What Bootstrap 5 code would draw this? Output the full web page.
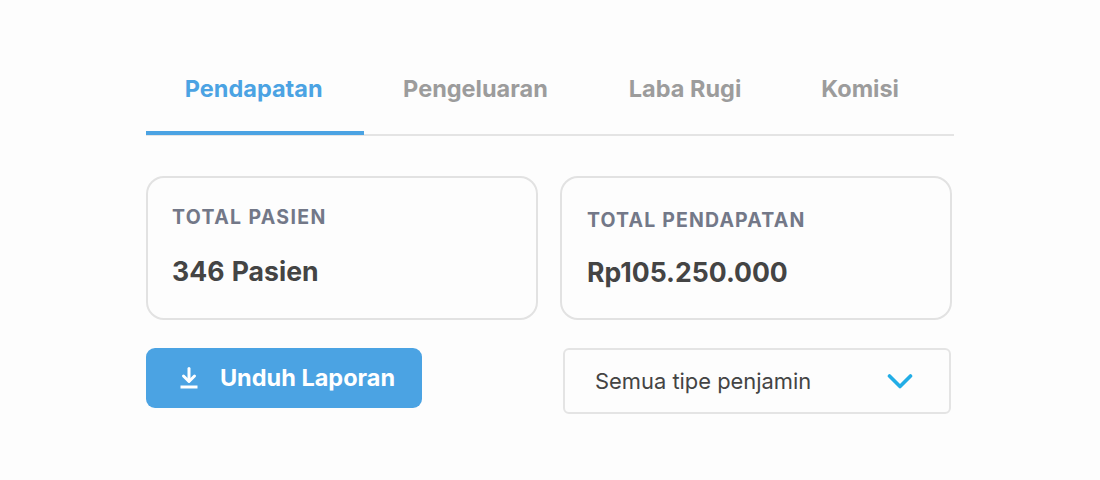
<!DOCTYPE html>
<html lang="id"><head><meta charset="utf-8"><title>Laporan</title>
<link href="https://cdn.jsdelivr.net/npm/bootstrap@5.3.0/dist/css/bootstrap.min.css" rel="stylesheet">
<style>
html,body{height:480px;overflow:hidden}
body{background:#fdfdfd;font-family:Inter,"Liberation Sans",sans-serif}
.wrap-main{width:808px;margin-left:146px;padding-top:62px}
.tabs-x{border-bottom:2px solid #e4e4e4;height:74px}
.tab-x{font-size:23.5px;font-weight:700;color:#9c9c9c;padding:1px 40px 21px;height:74px;line-height:52px;background:none;border:0}
.tab-x.on{color:#4ba3e3;padding:1px 41.5px 16px 38.8px;border-bottom:4px solid #4ba3e3;height:73px}
.tab-x.on + .tab-x{padding-left:39px;padding-right:41px}
.stats{margin-top:40px;gap:22px;width:806px}
.stat{width:392px;height:144px;border:2px solid #e2e2e2;border-radius:18px;background:#fdfdfd;padding:28px 24px 0}
.stat.alt{padding:31px 25px 0}
.stat-lab{font-size:19.5px;font-weight:700;letter-spacing:1.35px;color:#737888;line-height:22px}
.stat.alt .stat-lab{letter-spacing:1.15px}
.stat-val{font-size:26.6px;font-weight:700;color:#444;line-height:32px;margin-top:27px;word-spacing:1px}
.stat.alt .stat-val{margin-top:25px}
.actions{margin-top:28px}
.dl-btn{width:276px;height:60px;background:#4ba3e3;border:0;border-radius:9px;color:#fff;font-size:23.5px;font-weight:700;gap:21px;padding:0 0 0 6px}
.dl-btn:hover{background:#4ba3e3;color:#fff}
.sel-box{width:388px;height:66px;margin-left:141px;border:2px solid #e4e4e4;border-radius:6px;padding:0 36px 0 30px;font-size:21.9px;color:#444;background:#fdfdfd}
</style></head><body>
<main class="wrap-main">
<div class="tabs-x d-flex">
<button class="tab-x on" type="button">Pendapatan</button>
<button class="tab-x" type="button">Pengeluaran</button>
<button class="tab-x" type="button">Laba Rugi</button>
<button class="tab-x" type="button">Komisi</button>
</div>
<div class="stats d-flex">
<div class="stat"><div class="stat-lab">TOTAL PASIEN</div><div class="stat-val">346 Pasien</div></div>
<div class="stat alt"><div class="stat-lab">TOTAL PENDAPATAN</div><div class="stat-val">Rp105.250.000</div></div>
</div>
<div class="actions d-flex align-items-start">
<button class="dl-btn btn d-flex align-items-center justify-content-center" type="button">
<svg width="20" height="22" viewBox="0 0 20 22" fill="none" stroke="#fff" stroke-width="3" aria-hidden="true"><path d="M10 1.500v12" stroke-linecap="round"/><path d="M4.500 9l5.500 5.500 5.500-5.500" stroke-linecap="round" stroke-linejoin="round"/><path d="M1.500 20h17"/></svg>
<span>Unduh Laporan</span></button>
<div class="sel-box d-flex align-items-center justify-content-between"><span>Semua tipe penjamin</span>
<svg width="26" height="16" viewBox="0 0 26 16" fill="none" stroke="#22ade6" stroke-width="3.600" stroke-linecap="round" stroke-linejoin="round" aria-hidden="true"><path d="M2.500 3l10.500 10.500L23.500 3"/></svg></div>
</div>
</main>
<script src="https://cdn.jsdelivr.net/npm/bootstrap@5.3.0/dist/js/bootstrap.bundle.min.js"></script>
</body></html>
